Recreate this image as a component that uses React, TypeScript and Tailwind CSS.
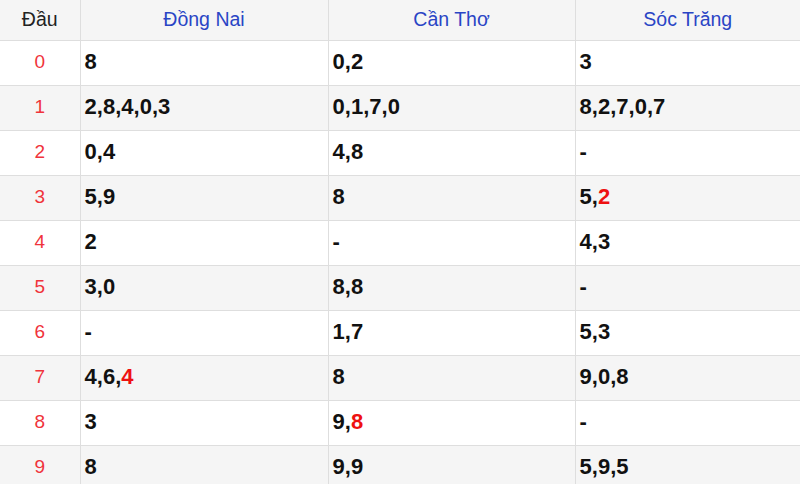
import React from 'react';

type Cell = { text: string; hot?: boolean }[];

const v = (s: string, hotLast = false): Cell => {
  const parts = s.split(',');
  return parts.map((p, i) => ({ text: p, hot: hotLast && i === parts.length - 1 }));
};

const rows: { head: string; cells: Cell[] }[] = [
  { head: '0', cells: [v('8'), v('0,2'), v('3')] },
  { head: '1', cells: [v('2,8,4,0,3'), v('0,1,7,0'), v('8,2,7,0,7')] },
  { head: '2', cells: [v('0,4'), v('4,8'), v('-')] },
  { head: '3', cells: [v('5,9'), v('8'), v('5,2', true)] },
  { head: '4', cells: [v('2'), v('-'), v('4,3')] },
  { head: '5', cells: [v('3,0'), v('8,8'), v('-')] },
  { head: '6', cells: [v('-'), v('1,7'), v('5,3')] },
  { head: '7', cells: [v('4,6,4', true), v('8'), v('9,0,8')] },
  { head: '8', cells: [v('3'), v('9,8', true), v('-')] },
  { head: '9', cells: [v('8'), v('9,9'), v('5,9,5')] },
];

const provinces = ['Đồng Nai', 'Cần Thơ', 'Sóc Trăng'];

const App = () => {
  return (
    <div className="w-[800px] h-[484px] overflow-hidden bg-white font-['Liberation_Sans',Arial,sans-serif]">
      <table className="w-full table-fixed border-collapse">
        <colgroup>
          <col className="w-[80px]" />
          <col className="w-[248px]" />
          <col className="w-[247px]" />
          <col />
        </colgroup>
        <thead>
          <tr className="h-[40px] bg-[#f5f5f5] text-[19.5px]">
            <th className="border-b border-[#dedede] font-normal text-[#222] text-center">Đầu</th>
            {provinces.map((p) => (
              <th key={p} className="border-b border-l border-[#dedede] font-normal text-[#2a45c5] text-center">
                {p}
              </th>
            ))}
          </tr>
        </thead>
        <tbody>
          {rows.map((r, i) => (
            <tr key={r.head} className={`h-[45px] ${i % 2 === 1 ? 'bg-[#f5f5f5]' : 'bg-white'}`}>
              <td className="border-b border-[#dedede] text-center text-[19px] text-[#f0333b]">{r.head}</td>
              {r.cells.map((c, j) => (
                <td key={j} className="border-b border-l border-[#dedede] pl-[4px] pb-[2px] text-[22px] font-bold text-[#111]">
                  {c.map((part, k) => (
                    <React.Fragment key={k}>
                      {k > 0 && ','}
                      <span className={part.hot ? 'text-[#ee1111]' : ''}>{part.text}</span>
                    </React.Fragment>
                  ))}
                </td>
              ))}
            </tr>
          ))}
        </tbody>
      </table>
    </div>
  );
};

export default App;
